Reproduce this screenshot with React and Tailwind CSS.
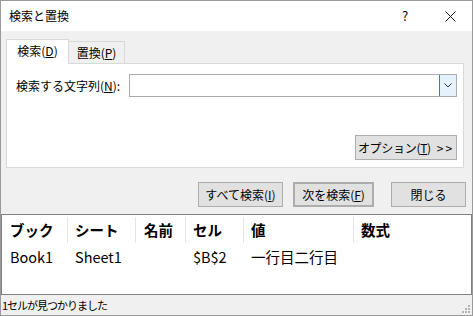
import React from 'react';

const font = { fontFamily: '"Noto Sans CJK JP", "Noto Sans", sans-serif' };

const Btn = ({ children, className = '' }) => (
  <div
    className={`flex items-center justify-center bg-[#e1e1e1] border border-[#adadad] h-[25px] text-[12px] text-black ${className}`}
  >
    {children}
  </div>
);

const columns = [
  { name: 'ブック', value: 'Book1', cls: 'pl-[8px]' },
  { name: 'シート', value: 'Sheet1', cls: 'pl-[7px]' },
  { name: '名前', value: '', cls: 'pl-[8px]' },
  { name: 'セル', value: '$B$2', cls: 'pl-[7px]' },
  { name: '値', value: '一行目二行目', cls: 'pl-[7px]' },
  { name: '数式', value: '', cls: 'pl-[7px]' },
];

export default function App() {
  return (
    <div
      style={font}
      className="w-[473px] h-[316px] border border-[#9a9a9a] flex flex-col bg-[#f0f0f0] overflow-hidden"
    >
      {/* title bar */}
      <div className="h-[30px] bg-white flex items-center relative">
        <span className="ml-[8px] text-[12px] text-black">検索と置換</span>
        <span className="absolute left-[401px] top-[5px] text-[13px] text-black">?</span>
        <svg className="absolute left-[444px] top-[10px]" width="11" height="11" viewBox="0 0 11 11">
          <path d="M0.5 0.5 L10.5 10.5 M10.5 0.5 L0.5 10.5" stroke="#111" strokeWidth="1" />
        </svg>
      </div>

      {/* tabs */}
      <div className="mt-[8px] h-[24px] pl-[5px] flex items-end">
        <div className="relative z-10 -mb-px w-[63px] h-[25px] bg-white border border-b-0 border-[#d9d9d9] flex items-center justify-center text-[12px] text-black">
          <span className="-mt-[2px]">検索(<span className="underline">D</span>)</span>
        </div>
        <div className="w-[56px] h-[22px] border border-l-0 border-b-0 border-[#d9d9d9] flex items-center justify-center text-[12px] text-black">
          置換(<span className="underline">P</span>)
        </div>
      </div>

      {/* panel */}
      <div className="ml-[5px] w-[458px] h-[105px] bg-white border border-[#d9d9d9] flex flex-col">
        <div className="mt-[10px] flex items-center">
          <div className="w-[122px] pl-[9px] text-[12px] text-black">
            検索する文字列(<span className="underline">N</span>):
          </div>
          <div className="w-[328px] h-[23px] border border-[#aaaaaa] flex justify-end bg-white">
            <div className="w-[17px] h-full bg-[#e5f1fb] border-l border-[#3c7fb1] flex items-center justify-center">
              <svg width="8" height="5" viewBox="0 0 8 5">
                <path d="M0.5 0.5 L4 4 L7.5 0.5" fill="none" stroke="#333" strokeWidth="1" />
              </svg>
            </div>
          </div>
        </div>
        <div className="mt-[38px] flex justify-end pr-[6px]">
          <Btn className="w-[102px]">
            <span className="tracking-[-0.3px]">オプション(<span className="underline">T</span>)</span>
            <span className="ml-[6px] tracking-[2px]">&gt;&gt;</span>
          </Btn>
        </div>
      </div>

      {/* buttons */}
      <div className="mt-[14px] flex">
        <Btn className="ml-[197px] w-[85px]">
          すべて検索(<span className="underline">I</span>)
        </Btn>
        <Btn className="ml-[10px] w-[81px] border-2 border-[#0078d7]">
          次を検索(<span className="underline">F</span>)
        </Btn>
        <Btn className="ml-[17px] w-[75px]">閉じる</Btn>
      </div>

      {/* results */}
      <div className="mt-[7px] h-[81px] bg-white border border-[#828282] grid grid-cols-[66px_68px_50px_58px_110px_1fr] content-start text-black">
        {columns.map((c, i) => (
          <div
            key={c.name}
            className={`mt-[2px] h-[26px] flex items-center text-[14.5px] font-bold ${c.cls} ${
              i < columns.length - 1 ? 'border-r border-[#e5e5e5]' : ''
            }`}
          >
            {c.name}
          </div>
        ))}
        {columns.map((c) => (
          <div key={c.name + 'v'} className={`h-[27px] flex items-center text-[14.5px] ${c.cls}`}>
            {c.value}
          </div>
        ))}
      </div>

      {/* status */}
      <div className="flex-1 flex items-center justify-between relative">
        <span className="pl-[1px] text-[11px] text-black tracking-[-1px]">1セルが見つかりました</span>
        <svg className="absolute right-[1px] bottom-[1px]" width="10" height="10" viewBox="0 0 10 10">
          <g fill="#b5b5b5">
            <rect x="7" y="1" width="2" height="2" />
            <rect x="4" y="4" width="2" height="2" />
            <rect x="7" y="4" width="2" height="2" />
            <rect x="1" y="7" width="2" height="2" />
            <rect x="4" y="7" width="2" height="2" />
            <rect x="7" y="7" width="2" height="2" />
          </g>
        </svg>
      </div>
    </div>
  );
}
